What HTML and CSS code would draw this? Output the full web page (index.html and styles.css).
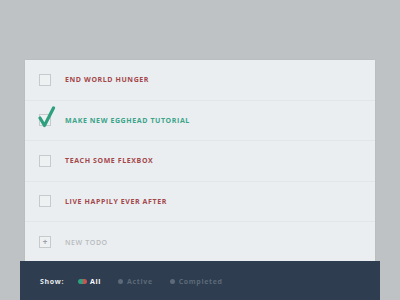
FILE: index.html
```html
<!DOCTYPE html>
<html>
<head>
<meta charset="utf-8">
<link rel="stylesheet" href="styles.css">
</head>
<body>
<div class="stage">
  <div class="card">
    <div class="row">
      <span class="box"></span>
      <span class="label todo">End world hunger</span>
    </div>
    <div class="row">
      <span class="box checked">
        <svg class="check" width="18" height="22" viewBox="0 0 18 22"><path d="M2 12 L6.5 19.5 L15.5 2" fill="none" stroke="#2ea07e" stroke-width="3.2" stroke-linecap="round" stroke-linejoin="round"/></svg>
      </span>
      <span class="label done">Make new egghead tutorial</span>
    </div>
    <div class="row">
      <span class="box"></span>
      <span class="label todo">Teach some flexbox</span>
    </div>
    <div class="row">
      <span class="box"></span>
      <span class="label todo">Live happily ever after</span>
    </div>
    <div class="row new">
      <span class="box plus">+</span>
      <span class="label placeholder">New todo</span>
    </div>
  </div>
  <div class="footer">
    <span class="show">Show:</span>
    <span class="filter active-filter"><span class="pill"></span>All</span>
    <span class="filter"><span class="dot"></span>Active</span>
    <span class="filter"><span class="dot"></span>Completed</span>
  </div>
</div>
</body>
</html>
```
FILE: styles.css
```css
html, body {
  margin: 0;
  padding: 0;
  width: 400px;
  height: 300px;
  overflow: hidden;
  background: #bec2c5;
  font-family: "Open Sans", "Liberation Sans", sans-serif;
}
.stage {
  padding-top: 60px;
  display: flex;
  flex-direction: column;
  align-items: center;
}
.card {
  width: 350px;
  background: #ebeef0;
  display: flex;
  flex-direction: column;
  box-shadow: 0 0 2px rgba(0,0,0,0.05);
}
.row {
  height: 39.5px;
  display: flex;
  align-items: center;
  padding-left: 14px;
  border-bottom: 1px solid #e2e6e8;
}
.row.new {
  height: 38px;
  padding-top: 1px;
  border-bottom: none;
}
.box {
  width: 10px;
  height: 10px;
  border: 1px solid #c6cacd;
  background: #eef1f2;
  position: relative;
  flex: none;
  display: flex;
  align-items: center;
  justify-content: center;
}
.check {
  position: absolute;
  left: -2px;
  top: -9px;
}
.plus {
  font-size: 8px;
  line-height: 1;
  color: #9aa0a4;
  font-weight: 700;
}
.label {
  margin-left: 14px;
  font-size: 7px;
  font-weight: 700;
  text-transform: uppercase;
  letter-spacing: 0.6px;
}
.todo { color: #a3474b; }
.done { color: #3aa48a; }
.placeholder { color: #b6bbbe; font-weight: 600; }
.footer {
  align-self: stretch;
  margin: 0 20px;
  height: 40px;
  background: #2e3d4f;
  display: flex;
  align-items: center;
  padding-left: 20px;
  font-size: 7px;
  font-weight: 700;
  letter-spacing: 0.65px;
}
.show {
  color: #e6eaee;
  margin-right: 14px;
}
.filter {
  display: flex;
  align-items: center;
  color: #5c6a79;
  margin-right: 17px;
}
.active-filter { color: #ffffff; }
.pill {
  width: 9px;
  height: 5px;
  border-radius: 3px;
  background: linear-gradient(90deg, #2ea07e 55%, #d05050 55%);
  margin-right: 3px;
}
.dot {
  width: 5px;
  height: 5px;
  border-radius: 50%;
  background: #5c6a79;
  margin-right: 4px;
}
```
